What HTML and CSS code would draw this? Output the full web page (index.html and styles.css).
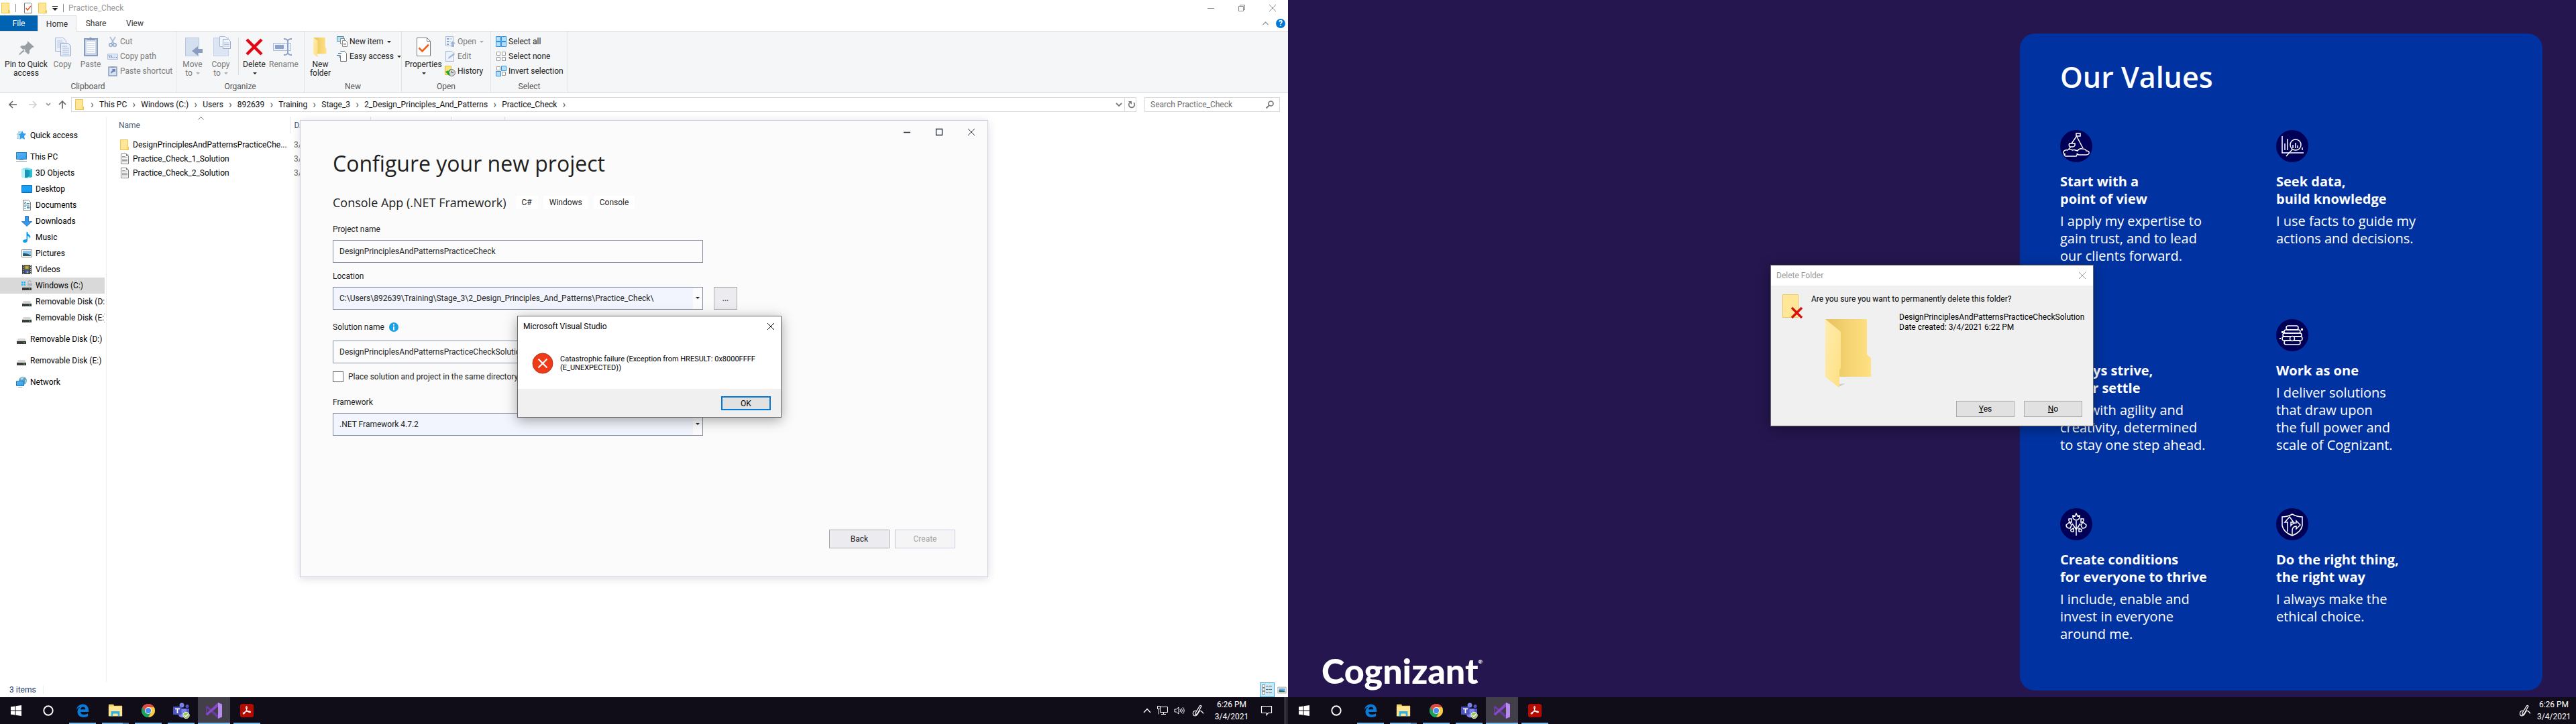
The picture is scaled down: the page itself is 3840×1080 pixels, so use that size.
FILE: index.html
```html
<!DOCTYPE html>
<html lang="en">
<head>
<meta charset="utf-8">
<title>Practice_Check</title>
<link rel="stylesheet" href="styles.css">
</head>
<body>
<svg class="defs" aria-hidden="true">
  <defs>
    <linearGradient id="fold" x1="0" x2="1"><stop offset="0" stop-color="#e8c25c"/><stop offset=".6" stop-color="#f6d676"/><stop offset="1" stop-color="#ffe082"/></linearGradient>
    <linearGradient id="flap" x1="0" x2="1" y1="0" y2="1"><stop offset="0" stop-color="#ffedad"/><stop offset="1" stop-color="#ffdf83"/></linearGradient>
    <linearGradient id="screen" x1="0" x2="1" y1="0" y2="1"><stop offset="0" stop-color="#5cb8f5"/><stop offset="1" stop-color="#2a9df0"/></linearGradient>
  </defs>
  <symbol id="i-folder" viewBox="0 0 16 16"><path d="M1.500.5h11v10l1 1v4h-12z" fill="#ffe797" stroke="#e9c54f"/><path d="M11.500 15.500v-4l1-1 1 1v4z" fill="#ffe797" stroke="#e9c54f"/></symbol>
  <symbol id="i-doc" viewBox="0 0 16 16"><path d="M2.500.5h8l3 3v12h-11z" fill="#fff" stroke="#7d7d7d"/><path d="M10.500.5v3h3" fill="none" stroke="#7d7d7d"/><path d="M4 4.500h5M4 6.500h8M4 8.500h8M4 10.500h8M4 12.500h8" stroke="#9a9a9a"/></symbol>
  <symbol id="i-checkdoc" viewBox="0 0 16 16"><path d="M2.500.5h9l2 2v13h-11z" fill="#fff" stroke="#7c7c7c"/><path d="M4.500 8l2.500 3 5-6" fill="none" stroke="#e8591a" stroke-width="1.600"/></symbol>
  <symbol id="i-disk" viewBox="0 0 16 16"><path d="M3 7h10l2 4H1z" fill="#d8d8d8"/><path d="M1 11h14v4H1z" fill="#3b3b3b"/><path d="M11 12.500h2v1h-2z" fill="#3fe04a"/></symbol>
  <symbol id="i-edge" viewBox="0 0 24 24"><path d="M2 11.500C2.600 5.400 6.800 1.500 12.400 1.500c6.300 0 9.600 4.600 9.600 10.200v2.400H8.600c.2 2.900 2.500 4.400 5.700 4.400 2.500 0 4.700-.7 6.500-1.900v4.500c-1.900 1.100-4.500 1.700-7.200 1.700-6 0-9.800-3.500-9.800-8.900 0-3.600 1.700-6.200 4.900-7.900C4.500 6.700 3 9 2 11.500zm6.700-1.400h8c0-2.600-1.300-4-3.700-4-2.300 0-3.900 1.500-4.300 4z" fill="#0b7bd8"/></symbol>
  <symbol id="i-files" viewBox="0 0 24 24"><path d="M1 2h8l1 2h13v17H1z" fill="#f5c64c"/><path d="M1 5h22v16H1z" fill="#ffe795"/><path d="M2 2.500h6v1H2z" fill="#fff2c0"/><path d="M5 13h14v8h-3v-3q0-1-1-1H9q-1 0-1 1v3H5z" fill="#2fb0e8"/></symbol>
  <symbol id="i-chrome" viewBox="0 0 24 24"><path d="M12 12L2.500 6.500A11 11 0 0 1 21.500 6.500z" fill="#dd4c3f"/><path d="M12 12L21.500 6.500A11 11 0 0 1 12 23z" fill="#fdcb3e"/><path d="M12 12v11A11 11 0 0 1 2.500 6.500z" fill="#1fa15e"/><path d="M12 6.500h9.500q.8 1.200 1 3H12z" fill="#fdcb3e"/><path d="M12 6.500h9.500A11 11 0 0 0 2.500 6.500L7.200 14.700z" fill="#dd4c3f"/><path d="M12 23l4.800-8.300L12 17.500l-4.800-2.800L2.500 6.500A11 11 0 0 0 12 23z" fill="#1fa15e"/><circle cx="12" cy="12" r="5.500" fill="#fff"/><circle cx="12" cy="12" r="4.500" fill="#4b8bf5"/></symbol>
  <symbol id="i-teams" viewBox="0 0 26 24"><circle cx="14" cy="4" r="3.500" fill="#7b83eb"/><circle cx="22" cy="5.500" r="2.500" fill="#5059c9"/><path d="M18 9h7v7q0 4-4 4h-3z" fill="#5059c9"/><path d="M9 9h12v8q0 5-6 5.500Q9 22 9 17z" fill="#7b83eb"/><rect x="1" y="6" width="12.500" height="12" rx="1" fill="#4b53bc"/><path d="M4 8.500h7v1.700H8.400V16H6.600v-5.800H4z" fill="#fff"/><circle cx="20.500" cy="19" r="4.700" fill="#92c353" stroke="#fff"/><path d="M18 19l2 2 3.200-3.500" fill="none" stroke="#fff" stroke-width="1.500"/></symbol>
  <symbol id="i-vs" viewBox="0 0 24 24"><path d="M0 6l2-1.200L18 19v5L1.500 8v8L0 17z" fill="#6a3aa8"/><path d="M18 0v6L2 19.200 0 18l.5-1.500z" fill="#8a46cc"/><path d="M18 0l6 2.500v19L18 24z" fill="#b78af0"/></symbol>
  <symbol id="i-acro" viewBox="0 0 24 24"><rect x="1" y="1" width="22" height="22" rx="4" fill="#b30b00"/><path d="M10.500 6.500c.3-1.700 2-1.500 1.800.5-.3 3-2.800 8-4.800 10-1.500 1.300-2.500-.3-1-1.400 2.800-1.900 7-2.900 10-2.400 2.300.5 1.600 2.300-.3 1.700-2.700-.8-5.200-4.200-5.700-8.400z" fill="none" stroke="#fff" stroke-width="1.300"/></symbol>
  <symbol id="i-win" viewBox="0 0 16 16"><path d="M0 2.300L6.500 1.400v6.100H0zM7.500 1.200L16 0v7.500H7.500zM0 8.500h6.500v6.100L0 13.700zM7.500 8.500H16V16l-8.500-1.200z" fill="#fff"/></symbol>
  <symbol id="i-pen" viewBox="0 0 18 18"><path d="M5 12.500L11.500 2q1.500-1.500 2.500.3L8 13.500l-3 1.500zM7 9.500q-5-1-5.500 3T4.500 17q3-.5 5-5t5-1.500 1.500 2.500" fill="none" stroke="#fff" stroke-width="1.200"/></symbol>
  <symbol id="i-x" viewBox="0 0 10 10"><path d="M0 0l10 10M10 0L0 10" fill="none" stroke="currentColor"/></symbol>
  <symbol id="i-bigfolder" viewBox="0 0 70 102"><path d="M61 85l15-3-15 4zM20 101l10-5-9 1z" fill="#ccc"/><path d="M0 0h61q1 0 1 1v52l6 5v27q0 1-1 1H20L0 80z" fill="url(#fold)"/><path d="M0 0l22 18q1 1 1 2v53l-2 3v25l-1 1L0 86z" fill="url(#flap)"/></symbol>
</svg>
<main class="desktop">

<section class="monitor">
  <div class="explorer">
    <header class="titlebar">
      <svg class="s16"><use href="#i-folder"/></svg><i class="tick"></i>
      <svg class="s16"><use href="#i-checkdoc"/></svg><svg class="s16 mid"><use href="#i-folder"/></svg>
      <svg class="qa" viewBox="0 0 8 8"><path d="M0 .5h8" stroke="#333"/><path d="M0 3h8L4 7z" fill="#222"/></svg><i class="tick"></i>
      <h1 class="wtitle">Practice_Check</h1>
      <div class="wbtns">
        <button aria-label="Minimize"><svg viewBox="0 0 10 10"><path d="M0 5.500h10" stroke="currentColor"/></svg></button>
        <button aria-label="Restore"><svg viewBox="0 0 10 10"><path d="M.5 2.500h7v7h-7zM2.500 2.500v-2h7v7h-2" fill="none" stroke="currentColor"/></svg></button>
        <button aria-label="Close"><svg><use href="#i-x"/></svg></button>
      </div>
    </header>
    <nav class="tabs">
      <button class="file">File</button><button class="on">Home</button><button>Share</button><button>View</button>
      <span class="help"><svg class="caretup" viewBox="0 0 9 6"><path d="M.5 5l4-4 4 4" fill="none" stroke="#999" stroke-width="1.300"/></svg><button class="q" aria-label="Help">?</button></span>
    </nav>
    <div class="ribbon">
      <section class="group clip"><div class="cmds">
        <button class="big pin"><svg viewBox="0 0 32 32"><path d="M19 6l10 9-3 1-4 4v4l-2 2-12-11 2-2h5l4-4z M14 18l-8 8 1 1 9-7z" fill="#99a0a5" transform="translate(-1 1)"/></svg>Pin to Quick<br>access</button>
        <button class="big off"><svg viewBox="0 0 32 32"><path d="M5.500 2.500h12l4 4v16h-16z" fill="#eaf0fa" stroke="#a9bad9"/><path d="M8 7h8M8 10h11M8 13h11M8 16h11" stroke="#b3c2de"/><path d="M13.500 10.500h11l4 4v15h-15z" fill="#eaf0fa" stroke="#92a8cf"/><path d="M16 15h7M16 18h10M16 21h10M16 24h10M16 27h10" stroke="#a9bad9"/></svg>Copy</button>
        <button class="big off"><svg viewBox="0 0 32 32"><path d="M7 4h19v25H7z" fill="#cad6ec" stroke="#8a9bbd" stroke-width="2"/><path d="M10 8h13v17H10z" fill="#fff"/><path d="M11 11h11M11 14h11M11 17h11M11 20h11M11 23h11" stroke="#b6c5e1"/><path d="M11 6V3h3q2-3 4 0h4v3z" fill="#8a9bbd"/></svg>Paste</button>
        <div class="smalls">
          <button class="off"><svg viewBox="0 0 16 16"><path d="M4 1l6 10M12 1L6 11" stroke="#a9bad9" stroke-width="1.600"/><circle cx="5" cy="13" r="2.300" fill="none" stroke="#8ea3c8" stroke-width="1.500"/><circle cx="11" cy="13" r="2.300" fill="none" stroke="#8ea3c8" stroke-width="1.500"/></svg>Cut</button>
          <button class="off"><svg viewBox="0 0 16 16"><path d="M.5 4.500h15v8H.5z" fill="#dfe8f6" stroke="#b0c0dc"/><path d="M2 6l2 4M5 6l2 4M8 9.500h1M10.500 9.500h1M13 9.500h1" stroke="#57719f"/></svg>Copy path</button>
          <button class="off"><svg viewBox="0 0 16 16"><path d="M2 2h12v13H2z" fill="#d9e3f4" stroke="#8a9bbd" stroke-width="1.500"/><path d="M5 3V1h6v2z" fill="#8a9bbd"/><path d="M5 12q0-4 3-5L7 5h5v5l-1-1.500Q8 9 5 12z" fill="#6a84b5"/></svg>Paste shortcut</button>
        </div></div><h2>Clipboard</h2></section>
      <section class="group org"><div class="cmds">
        <button class="big off"><svg viewBox="0 0 32 32"><path d="M5.500 2.500h20v27h-20z" fill="#d4dff0" stroke="#b8c7e0"/><path d="M15 22l9-7v4h7v6h-7v4z" fill="#8a9dbf"/></svg>Move<br>to <i class="dn"></i></button>
        <button class="big off"><svg viewBox="0 0 32 32"><path d="M5.500 2.500h22v27h-22z" fill="#dce5f3" stroke="#c4d1e7"/><path d="M14.500.5h8l3 3v12h-11z" fill="#f3f7fd" stroke="#a9bad9"/><path d="M19.500 4.500h8l3 3v11h-11z" fill="#f3f7fd" stroke="#92a8cf"/><path d="M21 10h8M21 12.500h8M21 15h8" stroke="#a9bad9"/></svg>Copy<br>to <i class="dn"></i></button>
        <i class="vsep"></i>
        <button class="big"><svg viewBox="0 0 32 32"><path d="M5 5l22 22M27 5L5 27" stroke="#e30613" stroke-width="4.500"/></svg>Delete<br><i class="dn"></i></button>
        <button class="big off ren"><svg viewBox="0 0 32 32"><path d="M.5 10.500h26v11H.5z" fill="#eef3fb" stroke="#a9bad9"/><path d="M3 13h13v6H3z" fill="#8ba1c7"/><path d="M16 4q5 0 6 3 1-3 6-3M22 7v18M16 28q5 0 6-3 1 3 6 3" fill="none" stroke="#8ba1c7" stroke-width="2"/></svg>Rename</button>
        </div><h2>Organize</h2></section>
      <section class="group new"><div class="cmds">
        <button class="big"><svg viewBox="-20 -6 110 112"><use href="#i-bigfolder" width="70" height="102"/></svg>New<br>folder</button>
        <div class="smalls">
          <button><svg viewBox="0 0 16 16"><path d="M.5.500h10v7H.5z" fill="#bfe3f2" stroke="#4a90b5"/><path d="M5.500 3.500h6v8h-6z" fill="#fff" stroke="#8a8a8a"/><path d="M8.500 6.500h5l2 2v7h-7z" fill="#fff" stroke="#8a8a8a"/><path d="M10 10.500h4M10 12.500h4" stroke="#aaa"/></svg>New item <i class="dn"></i></button>
          <button><svg viewBox="0 0 16 16"><path d="M5.500.5h6l3 3v12h-9v-9" fill="#fff" stroke="#777"/><path d="M2 3.500h5M0 6.500h5M3 9h3" stroke="#2f6da8"/></svg>Easy access <i class="dn"></i></button>
        </div></div><h2>New</h2></section>
      <section class="group open"><div class="cmds">
        <button class="big prop"><svg viewBox="0 0 32 32"><path d="M6.500 2.500h15l5 5v22h-20z" fill="#fff" stroke="#777"/><path d="M21.500 2.500v5h5" fill="none" stroke="#777"/><path d="M9.500 17.500l5 5 9.500-10" fill="none" stroke="#f2611c" stroke-width="2.600"/></svg>Properties<br><i class="dn"></i></button>
        <div class="smalls">
          <button class="off"><svg viewBox="0 0 16 16"><path d="M1.500.5h11v14h-11z" fill="#eef3fb" stroke="#a9bad9"/><path d="M3 3h3v2H3zM3 7h3v2H3zM3 11h3v2H3z" fill="#8fa3c8"/><path d="M7 4h4M7 8h2" stroke="#a9bad9"/><path d="M12 7l4 4h-2v5h-4v-5H8z" fill="#a3b5d4"/></svg>Open <i class="dn"></i></button>
          <button class="off"><svg viewBox="0 0 16 16"><path d="M1.500.5h9l3 3v12h-12z" fill="#eef3fb" stroke="#a9bad9"/><path d="M5 12l1-3 8-6 1 2-8 6z" fill="#a3b5d4"/></svg>Edit</button>
          <button><svg viewBox="0 0 16 16"><path d="M.5.500h9v13h-9z" fill="#ffe480" stroke="#dcb93d"/><circle cx="10.500" cy="10.500" r="5" fill="#d5d5d5" stroke="#777"/><path d="M10.500 8v2.500h2.500" fill="none" stroke="#555"/><path d="M1 9l4-2-.5 2Q7 5 10 5 6 8 6.500 12l2-1-2 4z" fill="#1fa82c"/></svg>History</button>
        </div></div><h2>Open</h2></section>
      <section class="group sel"><div class="cmds"><div class="smalls">
          <button><svg viewBox="0 0 16 16"><path d="M.5.500h7v7h-7zM8.500.5h7v7h-7zM.5 8.500h7v7h-7zM8.500 8.500h7v7h-7z" fill="#b5defa" stroke="#2d8fdd"/></svg>Select all</button>
          <button><svg viewBox="0 0 16 16"><path d="M1.500 1.500h5v5h-5zM9.500 1.500h5v5h-5zM1.500 9.500h5v5h-5zM9.500 9.500h5v5h-5z" fill="#fff" stroke="#999"/></svg>Select none</button>
          <button><svg viewBox="0 0 16 16"><path d="M1.500 1.500h5v5h-5zM9.500 9.500h5v5h-5z" fill="#fff" stroke="#999"/><path d="M8.500.5h7v7h-7zM.5 8.500h7v7h-7z" fill="#b5defa" stroke="#2d8fdd"/></svg>Invert selection</button>
        </div></div><h2>Select</h2></section>
    </div>
    <div class="addrbar">
      <div class="navbtns">
        <svg viewBox="0 0 14 14"><path d="M13 7H2M7 2L2 7l5 5" fill="none" stroke="#666" stroke-width="1.700"/></svg>
        <svg viewBox="0 0 14 14"><path d="M1 7h11M7 2l5 5-5 5" fill="none" stroke="#d0d0d0" stroke-width="1.700"/></svg>
        <svg class="tiny" viewBox="0 0 8 8"><path d="M1 2l3 3 3-3" fill="none" stroke="#888" stroke-width="1.500"/></svg>
        <svg viewBox="0 0 14 14"><path d="M7 13V2M2 7l5-5 5 5" fill="none" stroke="#666" stroke-width="1.700"/></svg>
      </div>
      <div class="addr">
        <svg class="s16"><use href="#i-folder"/></svg>
        <ol class="crumbs"><li><a href="#">This PC</a></li><li><a href="#">Windows (C:)</a></li><li><a href="#">Users</a></li><li><a href="#">892639</a></li><li><a href="#">Training</a></li><li><a href="#">Stage_3</a></li><li><a href="#">2_Design_Principles_And_Patterns</a></li><li><a href="#">Practice_Check</a></li></ol>
        <svg class="drop" viewBox="0 0 10 8"><path d="M1 2l4 4 4-4" fill="none" stroke="#777" stroke-width="1.800"/></svg>
        <button class="refresh" aria-label="Refresh"><svg viewBox="0 0 12 12"><path d="M3 3a4.300 4.300 0 1 0 6 0" fill="none" stroke="#777" stroke-width="1.700"/><path d="M1 1h5v5z" fill="#777"/></svg></button>
      </div>
      <label class="search"><input type="text" placeholder="Search Practice_Check" aria-label="Search"><svg viewBox="0 0 12 12"><circle cx="7.500" cy="4.500" r="3.500" fill="none" stroke="#777" stroke-width="1.700"/><path d="M5 7l-4.500 4.500" stroke="#777" stroke-width="1.800"/></svg></label>
    </div>
    <div class="body">
      <ul class="tree">
        <li class="root"><svg viewBox="0 0 16 16"><path d="M9 1l2 4 4 .5-3 3.500 1 5-4-2-4 2 1-5-2-3 3-1z" fill="#2ea1ec"/><path d="M3 3h4M1 6h4M2 9h3M1 12h3" stroke="#2ea1ec"/></svg>Quick access</li>
        <li class="root"><svg viewBox="0 0 16 16"><path d="M.5 1.500h15v10H.5z" fill="url(#screen)" stroke="#3b7cab"/><path d="M0 14.500h16M5 12.500h6" stroke="#8fa4b4"/></svg>This PC</li>
        <li><svg viewBox="0 0 16 16"><path d="M8 0l8 2v12l-8 2-8-2V2z" fill="#7fe3ec"/><path d="M0 2l8 2v12l-8-2z" fill="#bdf0f3"/><path d="M5 3h3l4 1v9l-4 2H5z" fill="#1d93b5"/><path d="M12 4l4-2v12l-4 1z" fill="#29bed2"/></svg>3D Objects</li>
        <li><svg viewBox="0 0 16 16"><path d="M.5 2.500h15v11H.5z" fill="#18a0f5" stroke="#1771b5"/><path d="M1 12.500h14" stroke="#0b6bb0"/></svg>Desktop</li>
        <li><svg viewBox="0 0 16 16"><path d="M2.500.5h8l3 3v12h-11z" fill="#fff" stroke="#7d7d7d"/><path d="M4 6l2-3 1 3M8 5.500h4M4 8h8M4 10.500h3M4 12.500h3" fill="none" stroke="#3c87b4"/><path d="M8 10h4v3H8z" fill="#4f93ba"/></svg>Documents</li>
        <li><svg viewBox="0 0 16 16"><path d="M5.500.5h5v8h5L8 15.500.5 8.500h5z" fill="#3a97e8" stroke="#2f7fcb"/></svg>Downloads</li>
        <li><svg viewBox="0 0 16 16"><path d="M7.500 0h1.500q.5 3 3 4.500t.5 5.500q0-3-3.500-4v7q-.5 3-4 3-3-.3-3-2.500Q2.500 11 7.500 11z" fill="#0aa0f2"/></svg>Music</li>
        <li><svg viewBox="0 0 16 16"><path d="M.5 2.500h15v11H.5z" fill="#fff" stroke="#8a8a8a"/><path d="M2 4h12v8H2z" fill="#8cc5f2"/><path d="M2 8q5-1 12 3v1H2z" fill="#2c5b67"/></svg>Pictures</li>
        <li><svg viewBox="0 0 16 16"><path d="M1 1h14v14H1z" fill="#444"/><path d="M2.500 1v14M13.500 1v14" stroke="#eee" stroke-dasharray="1.500 1.500"/><path d="M4.500 2h7v6h-7z" fill="#7f9442"/><path d="M4.500 9h7v5h-7z" fill="#3558b8"/><circle cx="8" cy="5" r="2" fill="#e0a33e"/><circle cx="9" cy="12" r="1.500" fill="#d9a634"/></svg>Videos</li>
        <li class="cur"><svg viewBox="0 0 16 16"><path d="M0 2h2.500v2.500H0zM3.500 2H6v2.500H3.500zM0 5.500h2.500V8H0zM3.500 5.500H6V8H3.500z" fill="#1cb6ee"/><path d="M9 4.500h7v4H9z" fill="#a9b4bb"/><path d="M10 4V2q2-3 4 0v1" fill="none" stroke="#a9b4bb" stroke-width="1.400"/><path d="M3 9h10l2 2H1z" fill="#cfcfcf"/><path d="M1 11h14v4H1z" fill="#3b3b3b"/><path d="M11 12.500h2v1h-2z" fill="#3fe04a"/></svg>Windows (C:)</li>
        <li><svg><use href="#i-disk"/></svg><span>Removable Disk (D:)</span></li>
        <li><svg><use href="#i-disk"/></svg><span>Removable Disk (E:)</span></li>
        <li class="root"><svg><use href="#i-disk"/></svg>Removable Disk (D:)</li>
        <li class="root"><svg><use href="#i-disk"/></svg>Removable Disk (E:)</li>
        <li class="root"><svg viewBox="0 0 16 16"><circle cx="10" cy="6" r="6" fill="#5c9fc0"/><path d="M6 3q3-3 6-2L9 5zM13 4l3 2-2 4z" fill="#b7dbe9"/><path d="M.5 6.500h11v7H.5z" fill="url(#screen)" stroke="#2f79ac"/><path d="M3 15.500h6" stroke="#8fa4b4"/></svg>Network</li>
      </ul>
      <table class="files">
        <colgroup><col class="c-name"><col class="c-date"><col class="c-date"><col class="c-size"><col></colgroup>
        <thead><tr><th>Name<svg class="sort" viewBox="0 0 9 5"><path d="M.5 4.500l4-4 4 4" fill="none" stroke="#777"/></svg></th><th>D...</th><th></th><th></th><th></th></tr></thead>
        <tbody>
          <tr><td><svg class="s16"><use href="#i-folder"/></svg>DesignPrinciplesAndPatternsPracticeChe...</td><td>3/</td><td></td><td></td><td></td></tr>
          <tr><td><svg class="s16"><use href="#i-doc"/></svg>Practice_Check_1_Solution</td><td>3/</td><td></td><td></td><td></td></tr>
          <tr><td><svg class="s16"><use href="#i-doc"/></svg>Practice_Check_2_Solution</td><td>3/</td><td></td><td></td><td></td></tr>
        </tbody>
      </table>
    </div>
    <footer class="status"><span>3 items</span>
      <div class="views"><button class="act" aria-label="Details"><svg viewBox="0 0 18 18"><path d="M1.500 1.500h4v4h-4zM1.500 6.500h4v4h-4zM1.500 11.500h4v4h-4z" fill="#fff" stroke="#888"/><path d="M7 3.500h4M12 3.500h4M7 8.500h4M12 8.500h4M7 13.500h4M12 13.500h4" stroke="#666"/></svg></button><button aria-label="Large icons"><svg viewBox="0 0 16 12"><path d="M1 1h14v10H1z" fill="#fff" stroke="#999"/><path d="M3 3h10v6H3z" fill="#5ca7e6"/><path d="M3 6q5 0 10 2v1H3z" fill="#2c6a5a"/></svg></button></div>
    </footer>
  </div>
  <footer class="taskbar">
    <button aria-label="Start"><svg class="w16"><use href="#i-win"/></svg></button><button aria-label="Cortana"><svg class="w16" viewBox="0 0 16 16"><circle cx="8" cy="8" r="6.700" fill="none" stroke="#fff" stroke-width="1.900"/></svg></button>
    <div class="apps"><button aria-label="Edge"><svg><use href="#i-edge"/></svg></button><button class="multi" aria-label="Explorer"><svg><use href="#i-files"/></svg></button><button aria-label="Chrome"><svg><use href="#i-chrome"/></svg></button><button aria-label="Teams"><svg class="wide"><use href="#i-teams"/></svg></button><button class="active" aria-label="Visual Studio"><svg class="full"><use href="#i-vs"/></svg></button><button aria-label="Acrobat"><svg><use href="#i-acro"/></svg></button></div>
    <div class="tray">
      <svg class="w12" viewBox="0 0 12 12"><path d="M1 9l5-5.500L11 9" fill="none" stroke="#fff" stroke-width="1.300"/></svg>
      <svg class="w16" viewBox="0 0 16 16"><path d="M4.500 2.500h11v8h-11zM9.500 10.500v3M6 13.500h7M.5 1.500h4v4h-4zM2.500 5.500v8" fill="none" stroke="#fff"/></svg>
      <svg class="w16" viewBox="0 0 16 16"><path d="M1 6h2.500L7 3v10L3.500 10H1zM9 6q1.500 2 0 4M11 4.500q3 3.500 0 7M13 3q4.500 5 0 10" fill="none" stroke="#fff"/></svg>
      <svg class="w18"><use href="#i-pen"/></svg>
      <time class="clock">6:26 PM<br>3/4/2021</time>
      <svg class="w16 note" viewBox="0 0 16 16"><path d="M.5 1.500h15v10h-5l-2.500 3v-3H.5z" fill="none" stroke="#fff" stroke-width="1.200"/></svg>
      <i class="peek"></i>
    </div>
  </footer>

  <section class="vs">
    <div class="vsbtns"><button aria-label="Minimize"><svg viewBox="0 0 10 10"><path d="M0 5.500h10" stroke="currentColor" stroke-width="1.500"/></svg></button><button aria-label="Maximize"><svg viewBox="0 0 10 10"><path d="M.5.500h9v9h-9z" fill="none" stroke="currentColor" stroke-width="1.300"/></svg></button><button aria-label="Close"><svg><use href="#i-x"/></svg></button></div>
    <form class="vsform">
      <h1>Configure your new project</h1>
      <div class="kind"><h2>Console App (.NET Framework)</h2><span>C#</span><span>Windows</span><span>Console</span></div>
      <label for="pname">Project name</label>
      <input type="text" id="pname" value="DesignPrinciplesAndPatternsPracticeCheck">
      <label for="loc">Location</label>
      <div class="row"><div class="combo"><select id="loc"><option>C:\Users\892639\Training\Stage_3\2_Design_Principles_And_Patterns\Practice_Check\</option></select></div><button type="button" class="browse">...</button></div>
      <label for="sname" class="info">Solution name <svg viewBox="0 0 14 14"><circle cx="7" cy="7" r="7" fill="#1ba1e2"/><path d="M6 2.500h2v2H6zM6 6h2v5.500H6z" fill="#fff"/></svg></label>
      <input type="text" id="sname" value="DesignPrinciplesAndPatternsPracticeCheckSolution">
      <label class="check"><input type="checkbox">Place solution and project in the same directory</label>
      <label for="fw">Framework</label>
      <div class="combo"><select id="fw"><option>.NET Framework 4.7.2</option></select></div>
      <div class="actions"><button type="button">Back</button><button type="button" disabled>Create</button></div>
    </form>
  </section>

  <section class="msg" role="dialog" aria-label="Microsoft Visual Studio">
    <header><span>Microsoft Visual Studio</span><button aria-label="Close"><svg><use href="#i-x"/></svg></button></header>
    <div class="msgbody"><svg viewBox="0 0 32 32"><circle cx="16" cy="16" r="15" fill="#f03a17" stroke="#b3301a"/><path d="M9.500 9.500l13 13M22.500 9.500l-13 13" stroke="#fff" stroke-width="2.200"/></svg><p>Catastrophic failure (Exception from HRESULT: 0x8000FFFF<br>(E_UNEXPECTED))</p></div>
    <footer><button>OK</button></footer>
  </section>
</section>

<section class="monitor second">
  <div class="wallpaper">
    <div class="brand">Cognizant<sup>®</sup></div>
    <article class="values">
      <h1>Our Values</h1>
      <div class="grid">
        <section><svg viewBox="0 0 48 48"><circle cx="24" cy="24" r="24" fill="#000057"/><g fill="none" stroke="#fff" stroke-width="1.500"><path d="M24 10V5h6v4h-6M24 10l-7 10M25 10l9 17M14 20h8v3q-1 2-3 2h-4q-3-2-1-5zM16 25l-3 3"/><path d="M8 36q-5-1-2-5 2-2 5-1 3-3 7 0 3-1 5 0l3 1q2-4 7-3 5 0 6 3 5 0 4 4-1 2-4 2H28q-1 0-3-2 1 2-1 4H8q-2-1-2-3"/></g></svg><h2>Start with a<br>point of view</h2><p>I apply my expertise to<br>gain trust, and to lead<br>our clients forward.</p></section>
        <section><svg viewBox="0 0 48 48"><circle cx="24" cy="24" r="24" fill="#000057"/><g fill="none" stroke="#fff" stroke-width="1.500"><path d="M9 9v25h32M13 30V20M17 30V13M39 30v-4"/><circle cx="29" cy="22" r="8"/><path d="M24 29l-9 10M25 27v-5M29 27v-8M32 27v-4"/></g></svg><h2>Seek data,<br>build knowledge</h2><p>I use facts to guide my<br>actions and decisions.</p></section>
        <section><svg viewBox="0 0 48 48"><circle cx="24" cy="24" r="24" fill="#000057"/></svg><h2>Always strive,<br>never settle</h2><p>I act with agility and<br>creativity, determined<br>to stay one step ahead.</p></section>
        <section><svg viewBox="0 0 48 48"><circle cx="24" cy="24" r="24" fill="#000057"/><g fill="none" stroke="#fff" stroke-width="1.500"><rect x="15" y="10" width="18" height="6" rx="3"/><rect x="12" y="16" width="24" height="5" rx="2.500"/><rect x="10" y="21" width="28" height="5" rx="2.500"/><rect x="9" y="26" width="30" height="6" rx="3"/><rect x="12" y="32" width="24" height="6" rx="3"/><circle cx="24" cy="29" r="3.500" fill="#000057"/></g><path d="M37 14h3v3h-3zM8 18h3v3H8zM5 28h2v2H5z" fill="#fff"/></svg><h2>Work as one</h2><p>I deliver solutions<br>that draw upon<br>the full power and<br>scale of Cognizant.</p></section>
        <section><svg viewBox="0 0 48 48"><circle cx="24" cy="24" r="24" fill="#000057"/><g fill="none" stroke="#fff" stroke-width="1.500"><path d="M24 41V19M24 32l-6-9M24 32l6-9M19 11l3 1 2-4 2 4 3-1q1 6-5 7-6-1-5-7zM13 16h4v5q-5 0-4-5zM31 16h4q1 5-4 5zM14 21l3 4-2 5q-6 0-6-5zM34 21l-3 4 2 5q6 0 6-5zM20 30v5q-5 1-4-3zM28 30v5q5 1 4-3z"/></g></svg><h2>Create conditions<br>for everyone to thrive</h2><p>I include, enable and<br>invest in everyone<br>around me.</p></section>
        <section><svg viewBox="0 0 48 48"><circle cx="24" cy="24" r="24" fill="#000057"/><g fill="none" stroke="#fff" stroke-width="1.500"><path d="M24 9q7 4 15 4v13q-2 10-15 15Q11 36 9 26V13q8 0 15-4z"/><path d="M17 35V21h-4l7-8 6 8h-4v5q3-4 8-4v-3l6 6-6 6v-4q-6 0-6 7v6"/></g></svg><h2>Do the right thing,<br>the right way</h2><p>I always make the<br>ethical choice.</p></section>
      </div>
    </article>
  </div>
  <footer class="taskbar">
    <button aria-label="Start"><svg class="w16"><use href="#i-win"/></svg></button><button aria-label="Cortana"><svg class="w16" viewBox="0 0 16 16"><circle cx="8" cy="8" r="6.700" fill="none" stroke="#fff" stroke-width="1.900"/></svg></button>
    <div class="apps"><button aria-label="Edge"><svg><use href="#i-edge"/></svg></button><button class="multi" aria-label="Explorer"><svg><use href="#i-files"/></svg></button><button aria-label="Chrome"><svg><use href="#i-chrome"/></svg></button><button aria-label="Teams"><svg class="wide"><use href="#i-teams"/></svg></button><button class="active" aria-label="Visual Studio"><svg class="full"><use href="#i-vs"/></svg></button><button aria-label="Acrobat"><svg><use href="#i-acro"/></svg></button></div>
    <div class="tray"><svg class="w18"><use href="#i-pen"/></svg><time class="clock">6:26 PM<br>3/4/2021</time></div>
  </footer>

  <section class="del" role="dialog" aria-label="Delete Folder">
    <header><span>Delete Folder</span><button aria-label="Close"><svg><use href="#i-x"/></svg></button></header>
    <div class="delbody">
      <svg class="fx" viewBox="0 0 32 36"><path d="M.5.500h23v34H.5z" fill="#ffe797" stroke="#ecc95c"/><path d="M14 20l15 15M29 20L14 35" stroke="#d8120f" stroke-width="3.500"/></svg>
      <div class="delmain">
        <p>Are you sure you want to permanently delete this folder?</p>
        <div class="what"><svg class="bigf"><use href="#i-bigfolder"/></svg><p>DesignPrinciplesAndPatternsPracticeCheckSolution<br>Date created: 3/4/2021 6:22 PM</p></div>
      </div>
    </div>
    <footer><button><u>Y</u>es</button><button><u>N</u>o</button></footer>
  </section>
</section>
</main>
</body>
</html>
```
FILE: styles.css
```css
* { box-sizing: border-box; margin: 0; padding: 0; }
body { font: 12px/16px Roboto, "Noto Sans", sans-serif; color: #000; background: #25164f; }
button, input, select { font: inherit; color: inherit; background: none; border: 0; }
ul, ol { list-style: none; }
a { color: inherit; text-decoration: none; }
h1, h2 { font: inherit; }
svg { display: block; flex: none; overflow: visible; }
.defs { position: absolute; width: 0; height: 0; }

.desktop { display: grid; grid-template-columns: 1fr 1fr; min-height: 100vh; }
.monitor { position: relative; display: flex; flex-direction: column; min-width: 0; }
.s16 { width: 16px; height: 16px; }

/* Explorer */
.explorer { flex: 1; display: flex; flex-direction: column; background: #fff; }
.titlebar { display: flex; align-items: center; height: 23px; padding-left: 1px; }
.titlebar .tick { width: 1px; height: 12px; background: #888; margin: 0 10px 0 6px; }
.titlebar .mid { margin-left: 6px; }
.titlebar .qa { width: 8px; height: 8px; margin: 3px 2px 0 6px; }
.titlebar .qa + .tick { margin-right: 7px; }
.wtitle { color: #999; }
.wbtns { margin-left: auto; display: flex; color: #8a8a8a; }
.wbtns button { width: 46px; display: flex; justify-content: center; }
.wbtns svg { width: 10px; height: 10px; }
.tabs { display: flex; height: 24px; border-bottom: 1px solid #dadbdc; color: #333; }
.tabs button { width: 58px; height: 23px; }
.tabs .file { width: 56px; background: #0063b1; color: #fff; }
.tabs .on { height: 24px; background: #f5f6f7; border: 1px solid #dadbdc; border-bottom: 0; }
.help { margin-left: auto; display: flex; align-items: center; gap: 11px; padding-right: 4px; }
.caretup { width: 9px; height: 6px; }
.tabs .q { width: 14px; height: 14px; border-radius: 50%; background: #0078d7; color: #fff; font-weight: 700; line-height: 14px; }

.ribbon { display: flex; background: #f5f6f7; border-bottom: 1px solid #dadbdc; color: #222; }
.group { display: flex; flex-direction: column; padding: 4px 0 1px; border-right: 1px solid #e2e3e4; }
.group h2 { text-align: center; color: #555; }
.cmds { display: flex; height: 70px; }
.clip { width: 263px; } .clip .cmds { padding-left: 6px; }
.org { width: 191px; } .org .cmds { padding-left: 3px; }
.new { width: 145px; } .new .cmds { padding-left: 3px; }
.open { width: 133px; } .open .cmds { padding-left: 4px; }
.sel { width: 115px; } .sel .cmds { padding-left: 3px; }
.big { width: 42px; padding-top: 3px; display: block; line-height: 13px; white-space: nowrap; align-self: flex-start; }
.big svg { width: 32px; height: 32px; margin: 0 auto 4px; }
.pin { width: 66px; } .prop { width: 56px; } .ren { width: 46px; }
.off { color: #7a7a7a; }
.vsep { width: 1px; height: 56px; background: #dadbdc; margin: 5px 2px 0 5px; }
.dn { display: inline-block; border: 3px solid transparent; border-top-color: currentColor; border-bottom: 0; vertical-align: middle; margin-left: 2px; }
.off .dn { opacity: .6; }
.smalls { padding-left: 4px; }
.smalls button { display: flex; align-items: center; height: 22px; gap: 3px; white-space: nowrap; }
.smalls svg { width: 16px; height: 16px; }

.addrbar { display: flex; align-items: center; padding: 6px 12px 7px 0; }
.navbtns { width: 106px; display: flex; align-items: center; padding-left: 12px; gap: 16px; }
.navbtns svg { width: 14px; height: 14px; }
.navbtns .tiny { width: 8px; height: 8px; margin-right: -6px; margin-left: -4px; }
.addr { flex: 1; height: 22px; border: 1px solid #d9d9d9; display: flex; align-items: center; padding-left: 4px; color: #111; }
.crumbs { flex: 1; display: flex; }
.crumbs li::before, .crumbs li:last-child::after { content: "›"; color: #555; display: inline-block; width: 21px; text-align: center; font-size: 16px; line-height: 16px; vertical-align: top; }
.drop { width: 10px; height: 8px; margin-right: 3px; }
.refresh { width: 17px; height: 20px; border-left: 1px solid #d9d9d9; display: flex; align-items: center; justify-content: flex-end; }
.refresh svg { width: 12px; height: 12px; }
.search { width: 202px; height: 22px; margin-left: 12px; border: 1px solid #d9d9d9; display: flex; align-items: center; padding: 0 8px; }
.search input { flex: 1; min-width: 0; outline: 0; }
.search input::placeholder { color: #6d6d6d; }
.search svg { width: 12px; height: 12px; }

.body { flex: 1; display: flex; align-items: stretch; }
.tree { width: 159px; border-right: 1px solid #eee; padding: 16px 2px 0 0; }
.tree li { height: 24px; display: flex; align-items: center; gap: 5px; padding-left: 32px; white-space: nowrap; overflow: hidden; }
.tree .root { padding-left: 24px; }
.tree .root + .root, .tree li + .root { margin-top: 8px; }
.tree svg { width: 16px; height: 16px; }
.tree .cur { background: #d9d9d9; }
.files { flex: 1; table-layout: fixed; border-collapse: collapse; align-self: flex-start; }
.c-name { width: 273px; } .c-date { width: 120px; } .c-size { width: 80px; }
.files th { height: 25px; text-align: left; font-weight: 400; color: #4c607a; border-right: 1px solid #e2e2e2; padding-left: 6px; position: relative; white-space: nowrap; }
.files th:first-child { padding-left: 18px; }
.files th:last-child { border: 0; }
.sort { position: absolute; left: 50%; top: 0; width: 9px; height: 5px; }
.files td { height: 21px; color: #6d6d6d; padding-left: 6px; white-space: nowrap; }
.files td:first-child { display: flex; align-items: center; gap: 4px; padding-left: 19px; color: #000; }
.files tbody::before { content: ""; display: block; height: 6px; }
.status { height: 22px; display: flex; align-items: center; padding: 0 2px 0 14px; color: #26406b; }
.status span { padding-right: 10px; border-right: 1px solid #eee; line-height: 12px; }
.views { margin-left: auto; display: flex; align-items: center; gap: 4px; }
.views .act { width: 22px; height: 22px; background: #cce8f6; border: 1px solid #3aa6d8; padding: 1px; }
.views .act svg { width: 18px; height: 18px; }
.views button svg { width: 14px; height: 11px; }

/* Taskbar */
.taskbar { height: 40px; display: flex; background: #100c18; color: #fff; }
.taskbar button { width: 48px; height: 40px; display: flex; align-items: center; justify-content: center; position: relative; }
.apps { display: flex; gap: 1px; padding-left: 3px; }
.apps svg { width: 22px; height: 22px; }
.apps .full { width: 24px; height: 24px; }
.apps .wide { width: 26px; height: 24px; }
.apps button { border-bottom: 2px solid transparent; padding-top: 2px; }
.apps button::after { content: ""; position: absolute; left: 4px; right: 4px; bottom: -2px; height: 2px; background: #76b9ed; }
.apps .multi::after { background: linear-gradient(90deg, #76b9ed 31px, #4f7fa6 31px); }
.apps .active { background: #433f49; border-bottom-color: #76b9ed; }
.w12 { width: 12px; height: 12px; } .w16 { width: 16px; height: 16px; } .w18 { width: 18px; height: 18px; }
.tray { margin-left: auto; display: flex; align-items: center; gap: 9px; }
.tray .w18 { margin-left: 2px; }
.clock { width: 64px; text-align: center; line-height: 18px; }
.second .clock { width: 50px; margin-right: 8px; }
.tray .note { margin: 0 10px 0 3px; }
.peek { width: 5px; height: 40px; background: #25212d; border-left: 1px solid #77747d; }

/* New project window */
.vs { position: absolute; left: 447px; top: 179px; width: 1026px; height: 682px; background: #fbfbfb; border: 1px solid #c9cbdc; box-shadow: 0 2px 12px rgba(0,0,0,.14); color: #1e1e1e; }
.vsbtns { display: flex; justify-content: flex-end; color: #26303f; }
.vsbtns button { width: 48px; height: 33px; display: flex; align-items: center; justify-content: center; }
.vsbtns svg { width: 10px; height: 10px; }
.vsform { padding: 9px 48px 0; }
.vsform h1 { font: 32px/44px "Open Sans", sans-serif; }
.kind { display: flex; align-items: center; gap: 8px; margin: 22px 0 18px; height: 28px; }
.kind h2 { font: 18px/28px "Open Sans", sans-serif; margin-right: 6px; }
.kind span { background: #fff; border-radius: 3px; padding: 2px 9px; }
.vsform > label { display: block; line-height: 16px; margin-bottom: 8px; }
.vsform > input, .combo { display: block; width: 552px; height: 34px; border: 1px solid #848fa5; margin-bottom: 12px; background: #fcfcfd; }
.vsform > input { padding: 0 9px; }
.combo { position: relative; margin: 0; }
.combo select { appearance: none; width: 536px; height: 32px; padding-left: 9px; background: #f2f5fd; display: block; }
.combo::after { content: ""; position: absolute; right: 4px; top: 14px; border: 3px solid transparent; border-top-color: #1b2a44; border-bottom: 0; }
.row { display: flex; gap: 16px; margin-bottom: 18px; }
.browse { width: 35px; background: #ecebf0; border: 1px solid #acacac; }
.vsform > .info { display: flex; gap: 7px; align-items: center; margin-bottom: 12px; }
.info svg { width: 14px; height: 14px; }
.vsform > .check { display: flex; align-items: center; gap: 7px; margin: 12px 0 22px; }
.check input { appearance: none; width: 16px; height: 16px; border: 1px solid #666; background: #fff; }
.actions { display: flex; justify-content: flex-end; gap: 8px; margin-top: 140px; }
.actions button { width: 90px; height: 28px; background: #ecebf0; border: 1px solid #acacac; }
.actions button:disabled { background: #f5f5f5; border-color: #ccccdc; color: #a2a4a5; }

/* Message boxes */
.msg, .del { position: absolute; border: 1px solid #666; background: #fff; box-shadow: 0 4px 18px rgba(0,0,0,.35); }
.msg { left: 771px; top: 471px; width: 394px; }
.msg header, .del header { display: flex; align-items: center; justify-content: space-between; height: 30px; padding: 0 10px 0 8px; }
.msg header svg, .del header svg { width: 10px; height: 10px; }
.msgbody { display: flex; gap: 10px; padding: 24px 10px 22px 21px; }
.msgbody svg { width: 32px; height: 32px; }
.msgbody p { line-height: 13px; padding-top: 3px; font-size: 11px; }
.msg footer { background: #f0f0f0; padding: 11px 15px 10px; display: flex; justify-content: flex-end; }
.msg footer button { width: 74px; height: 21px; background: #e1e1e1; border: 2px solid #0078d7; line-height: 16px; }
.del { left: 719px; top: 395px; width: 482px; background: #f0f0f0; }
.del header { background: #fff; color: #999; padding-right: 11px; }
.delbody { display: flex; padding: 13px 10px 0 17px; gap: 11px; }
.fx { width: 32px; height: 36px; }
.delmain > p { line-height: 15px; }
.what { display: flex; gap: 40px; padding: 12px 0 0 21px; }
.what p { line-height: 15px; }
.bigf { width: 70px; height: 102px; margin-top: 10px; }
.del footer { display: flex; justify-content: flex-end; gap: 14px; padding: 20px 16px 13px 0; }
.del footer button { width: 87px; height: 24px; background: #e1e1e1; border: 1px solid #adadad; }

/* Wallpaper */
.wallpaper { flex: 1; display: flex; justify-content: space-between; align-items: flex-end; background: #25164f; padding: 50px 50px 10px; color: #fff; font-family: "Open Sans", sans-serif; }
.brand { font: 900 52px/56px Lato, sans-serif; padding-bottom: 2px; }
.brand sup { font-size: 8px; line-height: 8px; vertical-align: 30px; }
.values { width: 779px; align-self: stretch; background: #0033a1; border-radius: 22px; padding: 35px 60px 0; }
.values h1 { font-size: 43px; line-height: 60px; font-weight: 600; }
.grid { display: grid; grid-template-columns: 322px 1fr; grid-template-rows: 282px 282px auto; margin-top: 49px; }
.grid svg { width: 48px; height: 48px; }
.grid h2 { font-size: 20px; line-height: 26px; font-weight: 700; margin: 16px 0 7px; }
.grid p { font-size: 20px; line-height: 26px; }
```
